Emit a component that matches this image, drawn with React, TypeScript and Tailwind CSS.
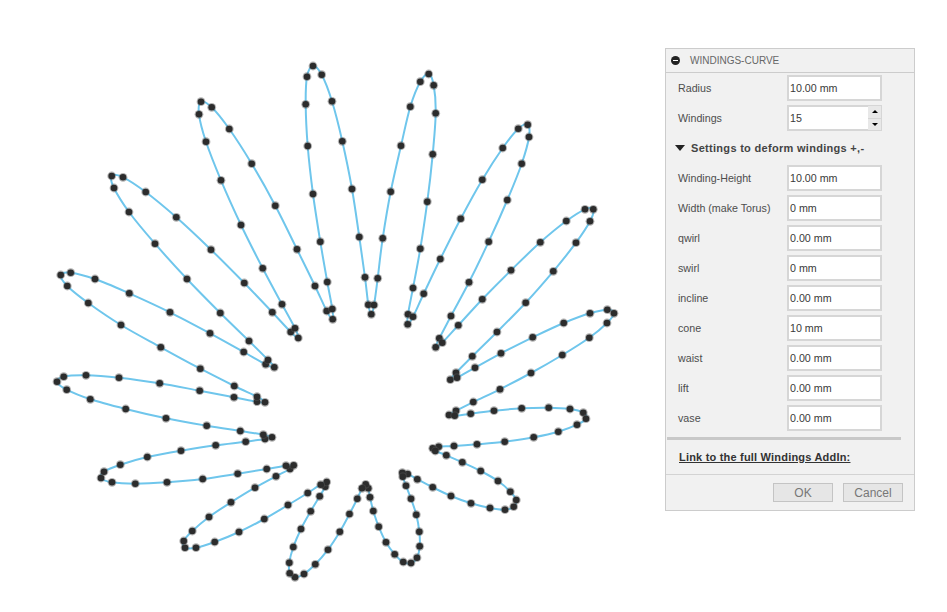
const FONT = "font-['Liberation_Sans',Arial,sans-serif]";

// curve control points, read off the picture, one line per petal
const POINTS: [number, number][] = [
  [365, 277.3], [368.3, 304.7], [371.3, 314.3], [374, 305],
  [377.7, 278.3], [382.7, 238.3], [390.7, 191.7], [401, 145.7], [410.3, 106.7], [420.3, 81.7], [428.7, 74], [433.7, 85.3], [435.7, 113.3], [432.7, 154.3], [427.3, 201.7], [420.3, 248.7], [413, 288], [408, 314.3], [407.7, 324.3], [413, 316.7],
  [423.7, 293.7], [440.3, 259], [460.7, 218.7], [482.3, 179.7], [502.7, 148], [518.3, 128.7], [527.7, 124.7], [529, 137], [521.7, 163.7], [507.3, 200], [488.7, 241.7], [469, 282.3], [451, 316], [439.3, 338.3], [435.7, 347.3], [442.3, 342.7],
  [458.3, 325.3], [482.3, 299.3], [511, 270.3], [540.3, 242.3], [566.3, 221], [585, 209.3], [593.3, 209.3], [590, 221.3], [576, 242.7], [553.3, 271.3], [525.7, 302.7], [497, 332], [472.3, 356.3], [456, 372.7], [450.3, 379.7], [457, 377.7],
  [475, 367.7], [501, 353.3], [532.7, 337.3], [563.7, 323], [590, 313.3], [607.3, 309.7], [614, 313.3], [607, 323], [589.3, 337.7], [562.3, 355], [531, 373], [500, 389.3], [473.3, 402], [456, 410.7], [449, 415], [454.7, 415.7],
  [470.7, 413.7], [494, 410.7], [521.7, 408.3], [548.7, 407.7], [570, 409], [583.3, 412.7], [586, 418.7], [577, 424.7], [558.3, 431.7], [533.7, 437.3], [504.7, 441.7], [477, 444.3], [454, 446], [438.7, 446.7], [432.7, 448.3], [435.3, 451],
  [446.3, 455.3], [462.3, 462.3], [480.7, 471], [498, 481], [510.3, 491.7], [516.3, 500], [513.7, 506.7], [505, 509.7], [490, 508], [471, 503.3], [451, 496], [432.7, 487.3], [417.3, 479.3], [407.7, 474], [402.3, 472.7], [402.7, 476.7],
  [406, 485.7], [411, 498.7], [416.3, 514.7], [419.3, 531.7], [419.7, 546.3], [417, 557.7], [411, 563], [403.3, 562], [394.7, 554.3], [386, 542.3], [378.7, 526.7], [373.3, 511], [370, 497.3], [368.3, 488.3], [365.7, 484.3], [362, 488.3],
  [357.3, 498.7], [349.5, 514], [339.8, 531.8], [328, 549.7], [315.3, 564.3], [304, 574], [295, 577.3], [289.7, 573.3], [289.3, 562.7], [293.3, 547], [301, 529], [310.7, 511.3], [319.7, 496.3], [325.3, 486.7], [326.7, 482], [320.7, 484.7],
  [307.7, 493], [288, 505], [264.3, 519], [239, 532], [214.7, 542], [196, 547.7], [185, 547.7], [183.7, 541], [192.3, 531], [209, 517], [231, 502.3], [255, 487.7], [276, 476.3], [290, 469], [293.7, 465.3], [286, 465.7],
  [266.7, 469], [237.7, 473.7], [202.7, 479], [167, 482.3], [135.3, 483.7], [112, 482.3], [101, 478], [104, 471.7], [120.3, 464.7], [147.3, 457], [181, 450.7], [215.7, 445.3], [245.7, 441.7], [265, 439], [272, 437.3], [263.3, 434.7],
  [240.3, 431], [206.7, 425.7], [166, 418.3], [125.7, 409], [90.3, 399.3], [66.7, 389.7], [57, 381.7], [63.7, 376.7], [86, 375.3], [119, 377.7], [159.7, 383.3], [199.7, 390.7], [234, 397.3], [257, 401.7], [265, 402.3], [257, 396.7],
  [234.3, 386], [200.3, 368.7], [160.8, 347.3], [121, 325], [88.3, 303], [67.3, 286], [60.7, 275], [70.7, 272.7], [95, 279], [129.3, 293.3], [170, 312.3], [210, 333.3], [243.7, 352], [265.7, 364.3], [274.3, 367.3], [268, 360],
  [249, 341], [220.3, 313], [187, 279], [155, 243.7], [129, 212], [114, 188], [111.7, 176], [123, 177.3], [145.7, 192], [176.3, 217.3], [211, 249.7], [244.3, 283], [272.3, 312.3], [290.7, 332], [298.3, 338], [295, 328.3],
  [282, 304.3], [262.7, 268.3], [241, 225], [221, 180.3], [206, 141.7], [199, 114.3], [201, 101.7], [211.7, 107.3], [229.3, 129], [251.7, 163.7], [275.3, 205.7], [297, 249.3], [315, 286], [326.7, 311], [332.7, 319.3], [332.3, 309],
  [327.3, 282], [320.3, 241.7], [313, 194], [307.7, 146], [305.7, 104.3], [307, 76.7], [313, 66], [321.7, 74.7], [332, 101.3], [342.3, 141.3], [352, 189], [359.3, 237],
];

// closed catmull-rom through the points
function curvePath(pts: [number, number][]) {
  const n = pts.length;
  let d = `M${pts[0][0]} ${pts[0][1]}`;
  for (let i = 0; i < n; i++) {
    const p0 = pts[(i - 1 + n) % n];
    const p1 = pts[i];
    const p2 = pts[(i + 1) % n];
    const p3 = pts[(i + 2) % n];
    const c1x = p1[0] + (p2[0] - p0[0]) / 6;
    const c1y = p1[1] + (p2[1] - p0[1]) / 6;
    const c2x = p2[0] - (p3[0] - p1[0]) / 6;
    const c2y = p2[1] - (p3[1] - p1[1]) / 6;
    d += `C${c1x.toFixed(1)} ${c1y.toFixed(1)} ${c2x.toFixed(1)} ${c2y.toFixed(1)} ${p2[0]} ${p2[1]}`;
  }
  return d + "Z";
}

function Field({ label, value, spinner }: { label: string; value: string; spinner?: boolean }) {
  return (
    <div className="flex items-center h-[26px] pl-[12px]">
      <span className="w-[109px] shrink-0 text-[10.7px] leading-none text-[#4d4d4d]">{label}</span>
      <div className="relative w-[95px] h-[26px] shrink-0 bg-white border-2 border-[#d6d6d6] flex items-center pl-[1px] pt-[1px] text-[10.7px] text-[#3a3a3a]">
        {value}
        {spinner && (
          <div className="absolute right-[-1px] top-[-1px] bottom-[-1px] w-[13px] flex flex-col gap-px bg-[#d6d6d6]">
            <div className="flex-1 bg-[#e8e8e8] flex items-center justify-center">
              <div className="w-0 h-0 border-x-[3px] border-x-transparent border-b-[3px] border-b-black" />
            </div>
            <div className="flex-1 bg-[#e8e8e8] flex items-center justify-center">
              <div className="w-0 h-0 border-x-[3px] border-x-transparent border-t-[3px] border-t-black" />
            </div>
          </div>
        )}
      </div>
    </div>
  );
}

export default function App() {
  return (
    <div className={`flex w-[947px] h-[612px] bg-white overflow-hidden ${FONT}`}>
      <svg width="665" height="612" viewBox="0 0 665 612" className="block shrink-0">
        <path d={curvePath(POINTS)} fill="none" stroke="#6fc6ec" strokeWidth="2" />
        {POINTS.map(([x, y], i) => (
          <g key={i}>
            <circle cx={x} cy={y} r="4.4" fill="#555" fillOpacity="0.45" />
            <circle cx={x} cy={y} r="3.3" fill="#2c2c2c" />
          </g>
        ))}
      </svg>

      <div className="mt-[48px] w-[250px] h-[463px] shrink-0 flex flex-col bg-[#f1f1f1] border border-[#cccccc]">
        <div className="flex items-center h-[24px] shrink-0 border-b border-[#cccccc] pl-[5px]">
          <span className="relative w-[9px] h-[9px] rounded-full bg-[#222] flex items-center justify-center">
            <span className="w-[5px] h-px bg-white" />
          </span>
          <span className="ml-[10px] text-[10px] text-[#666]">WINDINGS-CURVE</span>
        </div>

        <div className="flex flex-col gap-[4px] pt-[2px]">
          <Field label="Radius" value="10.00 mm" />
          <Field label="Windings" value="15" spinner />
        </div>

        <div className="flex items-center h-[34px] shrink-0 pl-[9px]">
          <div className="w-0 h-0 border-x-[5px] border-x-transparent border-t-[6px] border-t-[#222]" />
          <span className="ml-[6px] text-[11px] font-bold tracking-[0.3px] text-[#444]">Settings to deform windings +,-</span>
        </div>

        <div className="flex flex-col gap-[4px]">
          <Field label="Winding-Height" value="10.00 mm" />
          <Field label="Width (make Torus)" value="0 mm" />
          <Field label="qwirl" value="0.00 mm" />
          <Field label="swirl" value="0 mm" />
          <Field label="incline" value="0.00 mm" />
          <Field label="cone" value="10 mm" />
          <Field label="waist" value="0.00 mm" />
          <Field label="lift" value="0.00 mm" />
          <Field label="vase" value="0.00 mm" />
        </div>

        <div className="mt-[6px] ml-px w-[234px] h-[3px] shrink-0 bg-[#c8c8c8]" />

        <div className="flex items-center h-[34px] shrink-0 pl-[13px]">
          <a className="text-[11px] font-bold underline tracking-[0.2px] text-[#333]">Link to the full Windings AddIn:</a>
        </div>

        <div className="flex-1 flex justify-end items-start gap-[10px] border-t border-[#d3d3d3] pt-[8px] pr-[11px]">
          <button className="w-[60px] h-[19px] bg-[#e6e6e6] border border-[#c4c4c4] text-[12px] leading-none text-[#777]">OK</button>
          <button className="w-[60px] h-[19px] bg-[#e6e6e6] border border-[#c4c4c4] text-[12px] leading-none text-[#777]">Cancel</button>
        </div>
      </div>
    </div>
  );
}
